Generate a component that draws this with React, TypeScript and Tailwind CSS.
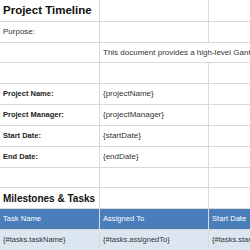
import React from 'react'

const line = 'border-[#dadada]'

function Cell({ children, className = '' }: { children?: React.ReactNode; className?: string }) {
  return (
    <div className={`flex items-center px-[3px] border-r border-b ${line} whitespace-nowrap overflow-hidden ${className}`}>
      {children}
    </div>
  )
}

const label = 'font-bold text-[7.5px] text-[#222]'
const value = 'text-[8px] text-[#333]'
const task = 'bg-[#dce6f1] text-[7.5px] text-[#333]'
const head = 'bg-[#4a7ebb] text-white text-[7.6px]'

export default function App() {
  return (
    <div
      className="w-[250px] h-[250px] overflow-hidden bg-white"
      style={{ fontFamily: '"Liberation Sans", Arial, sans-serif' }}
    >
      <div className="grid grid-cols-[100px_109px_60px] grid-rows-[22px_21px_20px_21px_21px_21px_21px_21px_20px_21px_21px_21px] w-[269px]">
        <Cell className="text-[11.5px] font-bold text-[#111]">Project Timeline</Cell>
        <Cell />
        <Cell />

        <Cell className="text-[8px] text-[#333]">Purpose:</Cell>
        <Cell />
        <Cell />

        <Cell />
        <Cell className={`col-span-2 ${value}`}>This document provides a high-level Gantt chart overview</Cell>

        <Cell />
        <Cell />
        <Cell />

        <Cell className={label}>Project Name:</Cell>
        <Cell className={value}>{'{projectName}'}</Cell>
        <Cell />

        <Cell className={label}>Project Manager:</Cell>
        <Cell className={value}>{'{projectManager}'}</Cell>
        <Cell />

        <Cell className={label}>Start Date:</Cell>
        <Cell className={value}>{'{startDate}'}</Cell>
        <Cell />

        <Cell className={label}>End Date:</Cell>
        <Cell className={value}>{'{endDate}'}</Cell>
        <Cell />

        <Cell />
        <Cell />
        <Cell />

        <Cell className="text-[10px] font-bold text-[#111]">Milestones &amp; Tasks</Cell>
        <Cell />
        <Cell />

        <Cell className={head}>Task Name</Cell>
        <Cell className={head}>Assigned To</Cell>
        <Cell className={head}>Start Date</Cell>

        <Cell className={task}>{'{#tasks.taskName}'}</Cell>
        <Cell className={task}>{'{#tasks.assignedTo}'}</Cell>
        <Cell className={task}>{'{#tasks.startDate}'}</Cell>
      </div>
    </div>
  )
}
